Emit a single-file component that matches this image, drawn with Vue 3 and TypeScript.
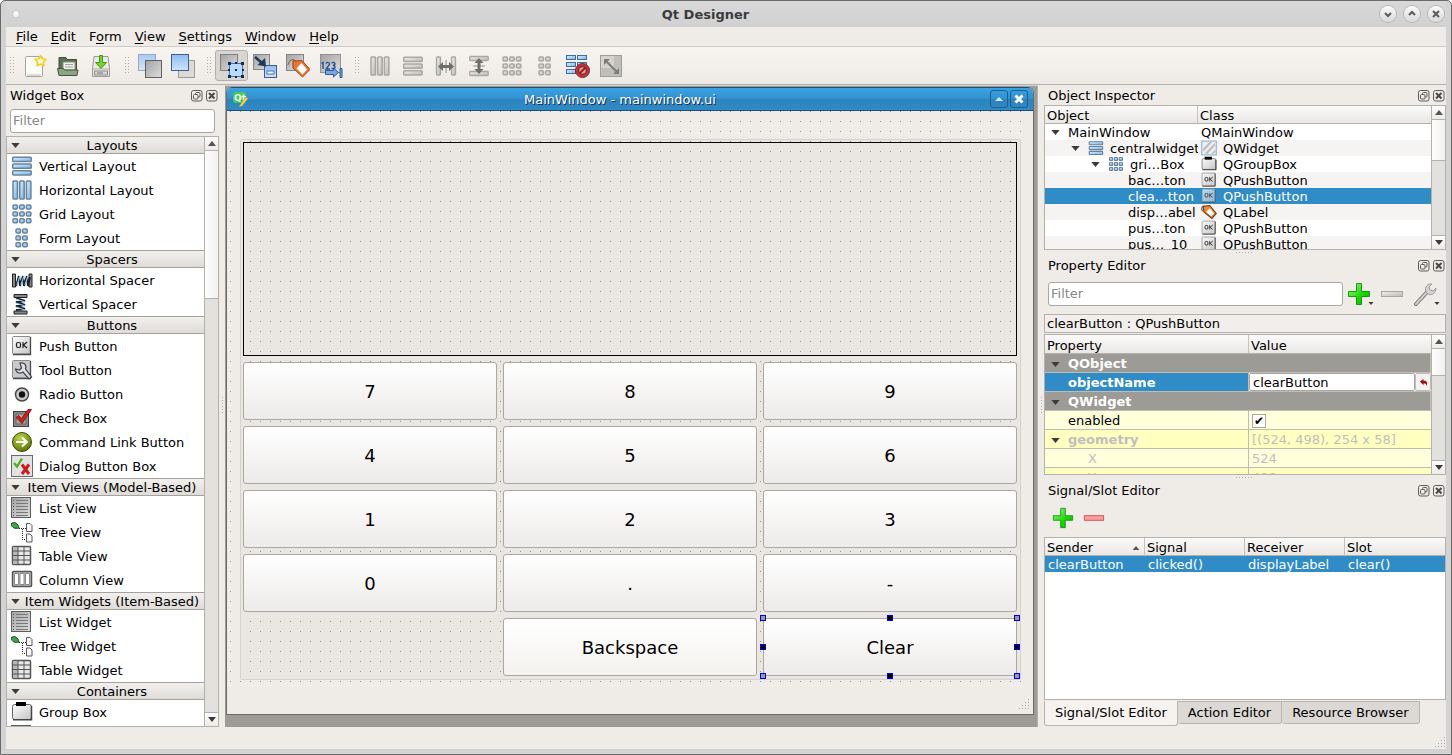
<script setup lang="ts">
import { ref } from 'vue'

interface Entry { icon: string; label: string }
interface Category { title: string; items: Entry[] }
interface TreeRow { depth: number; name: string; cls: string; open?: boolean; icon?: string; clsIcon?: string; selected?: boolean }
interface Tool { icon: string; label: string; active?: boolean; gray?: boolean }

const menus = [
  ['', 'F', 'ile'], ['', 'E', 'dit'], ['F', 'o', 'rm'], ['', 'V', 'iew'],
  ['', 'S', 'ettings'], ['', 'W', 'indow'], ['', 'H', 'elp'],
]

const toolGroups: Tool[][] = [
  [{ icon: 'new', label: 'New' }, { icon: 'open', label: 'Open' }, { icon: 'save', label: 'Save' }],
  [{ icon: 'back', label: 'Send to Back' }, { icon: 'front', label: 'Bring to Front' }],
  [
    { icon: 'widgets', label: 'Edit Widgets', active: true },
    { icon: 'signals', label: 'Edit Signals/Slots' },
    { icon: 'buddies', label: 'Edit Buddies' },
    { icon: 'taborder', label: 'Edit Tab Order' },
  ],
  [
    { icon: 'hl', label: 'Lay Out Horizontally', gray: true },
    { icon: 'vl', label: 'Lay Out Vertically', gray: true },
    { icon: 'hsplit', label: 'Horizontal Splitter', gray: true },
    { icon: 'vsplit', label: 'Vertical Splitter', gray: true },
    { icon: 'grid', label: 'Lay Out in a Grid', gray: true },
    { icon: 'form', label: 'Lay Out in a Form', gray: true },
    { icon: 'break', label: 'Break Layout' },
    { icon: 'adjust', label: 'Adjust Size' },
  ],
]

const categories: Category[] = [
  { title: 'Layouts', items: [
    { icon: 'vl', label: 'Vertical Layout' }, { icon: 'hl', label: 'Horizontal Layout' },
    { icon: 'grid', label: 'Grid Layout' }, { icon: 'form', label: 'Form Layout' }] },
  { title: 'Spacers', items: [
    { icon: 'hspacer', label: 'Horizontal Spacer' }, { icon: 'vspacer', label: 'Vertical Spacer' }] },
  { title: 'Buttons', items: [
    { icon: 'push', label: 'Push Button' }, { icon: 'tool', label: 'Tool Button' },
    { icon: 'radio', label: 'Radio Button' }, { icon: 'check', label: 'Check Box' },
    { icon: 'command', label: 'Command Link Button' }, { icon: 'dialog', label: 'Dialog Button Box' }] },
  { title: 'Item Views (Model-Based)', items: [
    { icon: 'list', label: 'List View' }, { icon: 'tree', label: 'Tree View' },
    { icon: 'table', label: 'Table View' }, { icon: 'column', label: 'Column View' }] },
  { title: 'Item Widgets (Item-Based)', items: [
    { icon: 'list', label: 'List Widget' }, { icon: 'tree', label: 'Tree Widget' },
    { icon: 'table', label: 'Table Widget' }] },
  { title: 'Containers', items: [
    { icon: 'group', label: 'Group Box' }, { icon: 'list', label: '' }] },
]

const keys = ['7', '8', '9', '4', '5', '6', '1', '2', '3', '0', '.', '-']
const handles = ['nw', 'n', 'ne', 'w', 'e', 'sw', 's', 'se']

const tree: TreeRow[] = [
  { depth: 0, name: 'MainWindow', cls: 'QMainWindow', open: true },
  { depth: 1, name: 'centralwidget', cls: 'QWidget', open: true, icon: 'vl', clsIcon: 'widget' },
  { depth: 2, name: 'gri…Box', cls: 'QGroupBox', open: true, icon: 'grid', clsIcon: 'group' },
  { depth: 3, name: 'bac…ton', cls: 'QPushButton', clsIcon: 'push' },
  { depth: 3, name: 'clea…tton', cls: 'QPushButton', clsIcon: 'push', selected: true },
  { depth: 3, name: 'disp…abel', cls: 'QLabel', clsIcon: 'label' },
  { depth: 3, name: 'pus…ton', cls: 'QPushButton', clsIcon: 'push' },
  { depth: 3, name: 'pus…_10', cls: 'QPushButton', clsIcon: 'push' },
]

const filter = ref('')
const propFilter = ref('')
const objectName = ref('clearButton')
const enabled = ref(true)
const tabs = ['Signal/Slot Editor', 'Action Editor', 'Resource Browser']
const activeTab = ref(0)
</script>

<template>
  <div class="window">
    <svg class="defs" aria-hidden="true">
      <defs>
        <linearGradient id="gBlue" x1="0" y1="0" x2="1" y2="1"><stop offset="0" stop-color="#d8f0ff" /><stop offset="1" stop-color="#7db2de" /></linearGradient>
        <linearGradient id="gGray" x1="0" y1="0" x2="1" y2="1"><stop offset="0" stop-color="#f0efed" /><stop offset="1" stop-color="#bbb9b6" /></linearGradient>
        <linearGradient id="gFace" x1="0" y1="0" x2="1" y2="1"><stop offset="0" stop-color="#fdfdfd" /><stop offset="1" stop-color="#c4c4c4" /></linearGradient>
        <linearGradient id="gSq" x1="0" y1="0" x2="1" y2="1"><stop offset="0" stop-color="#a2a2a2" /><stop offset="1" stop-color="#dedede" /></linearGradient>
        <linearGradient id="gSky" x1="0" y1="0" x2="0" y2="1"><stop offset="0" stop-color="#8fbcf2" /><stop offset="1" stop-color="#cfe3fb" /></linearGradient>
        <linearGradient id="gGreen" x1="0" y1="0" x2="1" y2="1"><stop offset="0" stop-color="#a6f58e" /><stop offset=".6" stop-color="#14d800" /><stop offset="1" stop-color="#0fb000" /></linearGradient>
        <radialGradient id="gOlive" cx=".4" cy=".3" r=".7"><stop offset="0" stop-color="#bfd44a" /><stop offset="1" stop-color="#5c7a00" /></radialGradient>
      </defs>
      <symbol id="new" viewBox="0 0 24 24">
        <rect x="2.500" y="2.500" width="17" height="20" rx="1" fill="#fbfbf8" stroke="#a5a39b" /><path d="M4 21h14" stroke="#dedcd2" stroke-width="2" />
        <path d="M17.500 1.500l1.700 3.300 3.800.5-2.700 2.700.7 3.800-3.500-1.800-3.500 1.800.7-3.800-2.700-2.700 3.800-.5z" fill="#fffbd0" stroke="#f0cf1c" stroke-width="1.600" stroke-linejoin="round" />
      </symbol>
      <symbol id="open" viewBox="0 0 24 24">
        <path d="M3 19V3.500h7l1 2h9.500V19z" fill="#5a7150" stroke="#3d5236" /><rect x="7" y="8" width="12" height="8" fill="#efefeb" stroke="#8b9285" /><path d="M9 10.500h8M9 13h8" stroke="#a3a3a0" />
        <path d="M1.500 14.500h6l1 1.500h13.500l-1 5.500H3z" fill="#8ea383" stroke="#42563a" />
      </symbol>
      <symbol id="save" viewBox="0 0 24 24">
        <path d="M5 2.500h14l1.500 12v8h-17v-8z" fill="#eceae6" stroke="#9b9a96" /><path d="M4 15h16" stroke="#b2b0ac" /><rect x="5.500" y="17" width="13" height="4" fill="#d6d6d2" stroke="#8b8b88" /><path d="M8 19h6" stroke="#777" />
        <path d="M10.500 1.500h3v7h4L12 14.500 6.500 8.500h4z" fill="#76d22c" stroke="#3e9a10" />
      </symbol>
      <symbol id="back" viewBox="0 0 24 24">
        <rect x=".5" y=".5" width="17" height="16" fill="url(#gSky)" stroke="#7191c0" opacity=".75" /><rect x="7.500" y="6.500" width="16" height="17" fill="url(#gSq)" stroke="#606060" />
      </symbol>
      <symbol id="front" viewBox="0 0 24 24">
        <rect x="7.500" y="6.500" width="16" height="17" fill="#dcdad6" stroke="#9d9b98" /><rect x=".5" y=".5" width="17" height="16" fill="url(#gSky)" stroke="#3e5f93" />
      </symbol>
      <symbol id="widgets" viewBox="0 0 24 24">
        <rect x=".5" y=".5" width="17" height="16" fill="url(#gSq)" stroke="#808080" /><rect x="9.500" y="9.500" width="13" height="13" fill="#b9dafb" stroke="#3d75c1" />
        <path d="M8 8h3v3H8zM15 8h2v2h-2zM21 8h3v3h-3zM8 15h2v2H8zM22 15h2v2h-2zM8 21h3v3H8zM15 22h2v2h-2zM21 21h3v3h-3zM15 15h2v2h-2z" fill="#14294c" />
      </symbol>
      <symbol id="signals" viewBox="0 0 24 24">
        <rect x=".5" y=".5" width="16" height="15" fill="url(#gSq)" stroke="#868686" /><rect x="11.500" y="11.500" width="12" height="12" fill="url(#gSky)" stroke="#3d5e8d" /><rect x="14" y="17" width="7" height="3" fill="#fff" stroke="#3f74c0" />
        <path d="M2 3l7 6" stroke="#20395b" stroke-width="2.500" /><path d="M13 12.500L4.500 11 12 4z" fill="#20395b" />
      </symbol>
      <symbol id="buddies" viewBox="0 0 24 24">
        <rect x=".5" y=".5" width="17" height="16" fill="url(#gSq)" stroke="#858585" /><path d="M2 11C3 5 9 3 12 11" fill="none" stroke="#70564a" />
        <path d="M7 7l9-.5 8 9-7.500 7.500L7 14z" fill="#ea752f" stroke="#a94410" /><path d="M15.500 9l5.500 6.500-4.500 5-6-6z" fill="#fff" />
      </symbol>
      <symbol id="taborder" viewBox="0 0 24 24">
        <rect x="1.500" y=".5" width="20" height="18" fill="url(#gSq)" stroke="#929292" />
        <path d="M2.500 9.500l1.500-1V15M7 9.500c1-2 4-1 3.500 1L7 15h4M12.500 9c2-1.500 4 0 3.500 1.500L14 11.500c3 0 3 4-1.500 3" fill="none" stroke="#1d4f9a" stroke-width="1.300" />
        <path d="M6.500 16.500h8v-2.500l5 4.500-5 4.500v-2.500h-8zM21 14.500h2v9h-2z" fill="#75a8e8" stroke="#173f80" stroke-width=".8" />
      </symbol>
      <symbol id="vl" viewBox="0 0 22 22">
        <g fill="var(--f)" stroke="var(--s)" stroke-width="1.500"><rect x="1.700" y="2.300" width="18.500" height="4.200" rx=".8" /><rect x="1.700" y="9" width="18.500" height="4.200" rx=".8" /><rect x="1.700" y="15.700" width="18.500" height="4.200" rx=".8" /></g>
      </symbol>
      <symbol id="hl" viewBox="0 0 22 22">
        <g fill="var(--f)" stroke="var(--s)" stroke-width="1.500"><rect x="2" y="2" width="4.500" height="18" rx=".8" /><rect x="8.700" y="2" width="4.500" height="18" rx=".8" /><rect x="15.400" y="2" width="4.500" height="18" rx=".8" /></g>
      </symbol>
      <symbol id="grid" viewBox="0 0 22 22">
        <g fill="var(--f)" stroke="var(--s)" stroke-width="1.500"><rect x="2" y="2" width="4.500" height="4" rx="1" /><rect x="8.700" y="2" width="4.500" height="4" rx="1" /><rect x="15.400" y="2" width="4.500" height="4" rx="1" /><rect x="2" y="8.900" width="4.500" height="4" rx="1" /><rect x="8.700" y="8.900" width="4.500" height="4" rx="1" /><rect x="15.400" y="8.900" width="4.500" height="4" rx="1" /><rect x="2" y="15.800" width="4.500" height="4" rx="1" /><rect x="8.700" y="15.800" width="4.500" height="4" rx="1" /><rect x="15.400" y="15.800" width="4.500" height="4" rx="1" /></g>
      </symbol>
      <symbol id="form" viewBox="0 0 22 22">
        <g fill="var(--f)" stroke="var(--s)" stroke-width="1.500"><rect x="5" y="2" width="4.500" height="4" rx="1" /><rect x="11.700" y="2" width="4.500" height="4" rx="1" /><rect x="5" y="8.900" width="4.500" height="4" rx="1" /><rect x="11.700" y="8.900" width="4.500" height="4" rx="1" /><rect x="5" y="15.800" width="4.500" height="4" rx="1" /><rect x="11.700" y="15.800" width="4.500" height="4" rx="1" /></g>
      </symbol>
      <symbol id="hsplit" viewBox="0 0 22 22">
        <g fill="var(--f)" stroke="var(--s)" stroke-width="1.300"><rect x="1.500" y="2" width="4" height="18" rx=".8" /><rect x="16.500" y="2" width="4" height="18" rx=".8" /></g><path d="M11 5v13" stroke="#8f8d8a" /><path d="M3 11.500l5-4.500v3h6V7l5 4.500-5 4.500v-3H8v3z" fill="#6d6f6c" />
      </symbol>
      <symbol id="vsplit" viewBox="0 0 22 22">
        <g fill="var(--f)" stroke="var(--s)" stroke-width="1.300"><rect x="1.700" y="1.500" width="18.500" height="4" rx=".8" /><rect x="1.700" y="16.500" width="18.500" height="4" rx=".8" /></g><path d="M5 11h12" stroke="#8f8d8a" /><path d="M11 3l4.500 5h-3v6h3L11 19l-4.500-5h3V8h-3z" fill="#6d6f6c" />
      </symbol>
      <symbol id="break" viewBox="0 0 24 24">
        <g fill="url(#gBlue)" stroke="#3f6da0"><rect x=".5" y="1.500" width="9" height="4" /><rect x="11.500" y="1.500" width="9" height="4" /><rect x=".5" y="8.500" width="9" height="4" /><rect x="11.500" y="8.500" width="9" height="4" /><rect x=".5" y="15.500" width="9" height="4" /></g>
        <circle cx="16.500" cy="16.500" r="7" fill="#c4383a" stroke="#7e2224" /><circle cx="16.500" cy="16.500" r="4" fill="#ef9a98" stroke="#8a2426" stroke-width="1.500" /><path d="M13.500 19.500l6-6" stroke="#8a2426" stroke-width="2" />
      </symbol>
      <symbol id="adjust" viewBox="0 0 24 24">
        <rect x="1.500" y="1.500" width="21" height="21" fill="#c1bfbc" stroke="#a09e9b" /><path d="M2 2h13v12H2z" fill="#d5d3d0" /><path d="M7 7l11 11" stroke="#7c7d79" stroke-width="2" /><path d="M5 5h6l-6 6zM20 20v-6l-6 6z" fill="#7c7d79" />
      </symbol>
      <symbol id="hspacer" viewBox="0 0 22 22">
        <path d="M1.500 5h3v13h-3zM18 5h3v13h-3z" fill="#888" stroke="#222" /><path d="M5 17L8 7l1 10 3-10 1 10 3-10 1 10 2-9" fill="none" stroke="#18222c" stroke-width="2" /><path d="M6 16l3-9M10 16l3-9M14 16l3-9" stroke="#94c6e8" stroke-width="1.200" />
      </symbol>
      <symbol id="vspacer" viewBox="0 0 22 22">
        <path d="M3 1.500h13v3H3zM3 18h13v3H3z" fill="#888" stroke="#222" /><path d="M5 5l9 3-9 1 9 3-9 1 9 3-9 1" fill="none" stroke="#18222c" stroke-width="2" /><path d="M5 6l9 3M5 10l9 3M5 14l9 3" stroke="#94c6e8" stroke-width="1.200" />
      </symbol>
      <symbol id="push" viewBox="0 0 22 22">
        <rect x="1.500" y="1.500" width="18" height="17.500" rx="1" fill="url(#gFace)" stroke="#8b8b8b" /><path d="M2 19.500h17.500V2" fill="none" stroke="#4b4b4b" stroke-width="1.300" />
        <rect x="5.500" y="7.500" width="4" height="5" rx="1.500" fill="none" stroke="#222" stroke-width="1.200" /><path d="M12 7v6M16 7l-3.500 3 3.500 3" fill="none" stroke="#222" stroke-width="1.200" />
      </symbol>
      <symbol id="tool" viewBox="0 0 22 22">
        <rect x="1.500" y="1.500" width="18" height="17.500" rx="1" fill="#c9c9cb" stroke="#8b8b8b" /><path d="M2 19.500h17.500V2" fill="none" stroke="#4b4b4b" stroke-width="1.300" />
        <path d="M9 4c4-1 7 2 5.500 6l6 8-2.500 2-6-7c-3 2-7 1-7.500-3l4 1 2-2z" fill="#dfe1e6" stroke="#3b3d46" stroke-width="1.200" />
      </symbol>
      <symbol id="radio" viewBox="0 0 22 22"><circle cx="11" cy="11.500" r="6.500" fill="#cacaca" stroke="#4b4b4b" stroke-width="1.500" /><circle cx="11" cy="11.500" r="3.200" fill="#111" /></symbol>
      <symbol id="check" viewBox="0 0 22 22">
        <rect x="2.500" y="4.500" width="15" height="15" fill="#8b8b8b" stroke="#3d3d3d" /><rect x="5" y="7" width="10" height="10" fill="#a6a6a6" stroke="#666" />
        <path d="M5 10.500l2.500-2 3 3L17 2.500h3.500L11 16.500z" fill="#d61d1d" stroke="#7a0b0b" stroke-width=".8" />
      </symbol>
      <symbol id="command" viewBox="0 0 22 22"><circle cx="11" cy="11" r="9.500" fill="url(#gOlive)" stroke="#3f4a10" /><path d="M5 11h10M11 6.500l4.700 4.500-4.700 4.500" fill="none" stroke="#fff" stroke-width="2.200" /></symbol>
      <symbol id="dialog" viewBox="0 0 22 22">
        <rect x=".5" y=".5" width="21" height="21" fill="#e2e2e2" stroke="#6a6a6a" /><path d="M3 8l3 3.500L11 3.500" fill="none" stroke="#4cb218" stroke-width="2.300" /><path d="M11 9.500l7 9.500M18 9.500L11 19" stroke="#cb1c1c" stroke-width="3" />
      </symbol>
      <symbol id="list" viewBox="0 0 22 22">
        <rect x=".5" y=".5" width="19" height="20" fill="url(#gSq)" stroke="#5e5e5e" /><path d="M5 3.500h12M5 6.500h12M5 9.500h12M5 12.500h12M5 15.500h12M5 18.500h12" stroke="#777" /><path d="M2 3.500h1M2 6.500h1M2 9.500h1M2 12.500h1M2 15.500h1M2 18.500h1" stroke="#555" />
      </symbol>
      <symbol id="tree" viewBox="0 0 22 22">
        <path d="M0 3c3-3 7-1 8 4-4 1-7 0-8-4z" fill="#3aa84a" stroke="#0e4a18" /><path d="M8 7.500h7M11.500 8v10.500h4" fill="none" stroke="#222" stroke-dasharray="1 1" />
        <path d="M15.500 2.500h3.500l2 2v6h-5.500zM15.500 13h3.500l2 2v6h-5.500z" fill="#f8f8f8" stroke="#5a5a5a" />
      </symbol>
      <symbol id="table" viewBox="0 0 22 22">
        <rect x="1.500" y="1.500" width="18" height="18" rx="1" fill="#e8e8e8" stroke="#555" stroke-width="1.500" /><path d="M2 2h5v17H2z" fill="#b7b7b7" /><path d="M2 6h17M2 10.500h17M2 15h17M7 2v17M13 2v17" stroke="#555" />
      </symbol>
      <symbol id="column" viewBox="0 0 22 22"><rect x="1.500" y="2.500" width="19" height="15" rx="1" fill="#bcbcbc" stroke="#555" stroke-width="1.500" /><path d="M3.500 4.500h4v11h-4zM9 4.500h4v11H9zM14.500 4.500h4v11h-4z" fill="#fff" stroke="#777" stroke-width=".8" /></symbol>
      <symbol id="group" viewBox="0 0 22 22"><rect x="1.500" y="3.500" width="19" height="15" rx="2" fill="url(#gFace)" stroke="#666" /><path d="M2 18.800h18.500V5" fill="none" stroke="#444" stroke-width="1.500" /><path d="M5 1h10v4H5z" fill="#000" /></symbol>
      <symbol id="widget" viewBox="0 0 22 22"><rect x="1" y="1.500" width="20" height="19" fill="#eee" stroke="#8fb0dc" stroke-width="1.500" /><path d="M3 12l8-9h4L3 16zM5 19L19 4v4L9 19zM14 19l6-6v3l-3 3z" fill="#bbb" /></symbol>
      <symbol id="label" viewBox="0 0 22 22"><path d="M2 10C-1 3 4 1 9 6" fill="none" stroke="#555" stroke-width="1.500" /><path d="M3 3l9-1 9 11-6 7L4 11z" fill="#f08a30" stroke="#6a3b16" stroke-width="1.500" /><path d="M12 6l6 7-4 4-7-6z" fill="#fff" /></symbol>
      <symbol id="plus" viewBox="0 0 24 24"><path d="M9.500 1.500h5v8H22.500v5h-8V22.500h-5v-8H1.500v-5h8z" fill="url(#gGreen)" stroke="#149a10" /></symbol>
      <symbol id="minus" viewBox="0 0 24 24"><rect x="1.500" y="9.500" width="21" height="5" fill="var(--f)" stroke="var(--s)" /></symbol>
      <symbol id="wrench" viewBox="0 0 24 24"><path d="M3 22L15 9" stroke="#777" stroke-width="4" stroke-linecap="round" /><path d="M3 22L15 9" stroke="#cfcfcf" stroke-width="2" stroke-linecap="round" /><path d="M13 10c-2-5 2-9 6-8l-3 3 1 3 3 1 3-3c0 5-4 8-8 6z" fill="#d2d2d2" stroke="#9c9c9c" /></symbol>
      <symbol id="down" viewBox="0 0 10 6"><path d="M0 0h10L5 6z" fill="#3c3b39" /></symbol>
      <symbol id="up" viewBox="0 0 10 6"><path d="M0 6h10L5 0z" fill="#55534f" /></symbol>
      <symbol id="float" viewBox="0 0 12 12"><rect x=".5" y=".5" width="10.500" height="10.500" rx="2" fill="none" stroke="#5d5b58" /><rect x="4.500" y="2.500" width="4.500" height="4.500" rx="1" fill="none" stroke="#5d5b58" /><rect x="2.500" y="4.500" width="4.500" height="4.500" rx="1" fill="#efebe7" stroke="#5d5b58" /></symbol>
      <symbol id="close" viewBox="0 0 12 12"><rect x=".5" y=".5" width="10.500" height="10.500" rx="2" fill="none" stroke="#5d5b58" /><path d="M3 3l5.500 5.500M8.500 3L3 8.500" stroke="#4a4946" stroke-width="2" /></symbol>
      <symbol id="grip" viewBox="0 0 11 11"><path d="M10 0h1v1h-1zM7 3h1v1H7zM10 3h1v1h-1zM4 6h1v1H4zM7 6h1v1H7zM10 6h1v1h-1zM1 9h1v1H1zM4 9h1v1H4zM7 9h1v1H7zM10 9h1v1h-1z" fill="#aaa7a3" /></symbol>
    </svg>

    <header class="titlebar">
      <span class="pin"></span>
      <h1>Qt Designer</h1>
      <div class="winbtns">
        <button aria-label="Minimize"><svg viewBox="0 0 16 16"><path d="M5 7l3 3 3-3" /></svg></button>
        <button aria-label="Maximize"><svg viewBox="0 0 16 16"><path d="M5 9l3-3 3 3" /></svg></button>
        <button aria-label="Close"><svg viewBox="0 0 16 16"><path d="M5 5l6 6M11 5l-6 6" /></svg></button>
      </div>
    </header>

    <nav class="menubar">
      <button v-for="m in menus" :key="m[1]">{{ m[0] }}<u>{{ m[1] }}</u>{{ m[2] }}</button>
    </nav>

    <div class="toolbars">
      <div v-for="(g, i) in toolGroups" :key="i" class="toolbar">
        <span class="handle"></span>
        <button v-for="t in g" :key="t.icon" :aria-label="t.label" :class="{ active: t.active, gray: t.gray }">
          <svg><use :href="'#' + t.icon" /></svg>
        </button>
      </div>
    </div>

    <main class="body">
      <aside class="left">
        <div class="docktitle">
          <h2>Widget Box</h2>
          <button aria-label="Float"><svg><use href="#float" /></svg></button>
          <button aria-label="Close"><svg><use href="#close" /></svg></button>
        </div>
        <input v-model="filter" class="field boxfilter" placeholder="Filter" aria-label="Filter widgets" />
        <div class="frame widgetbox">
          <div class="scroller">
            <section v-for="c in categories" :key="c.title">
              <button class="cat"><svg><use href="#down" /></svg><span>{{ c.title }}</span></button>
              <ul>
                <li v-for="it in c.items" :key="it.label"><svg><use :href="'#' + it.icon" /></svg><span>{{ it.label }}</span></li>
              </ul>
            </section>
          </div>
          <div class="scrollbar">
            <button aria-label="Scroll up"><svg><use href="#up" /></svg></button>
            <div class="track"><div class="thumb t1"></div></div>
            <button aria-label="Scroll down"><svg><use href="#down" /></svg></button>
          </div>
        </div>
      </aside>

      <div class="vsplitter"></div>

      <section class="mdi">
        <div class="subwin">
          <div class="subtitle">
            <svg class="qt" viewBox="0 0 16 16"><rect x="0" y="1" width="13" height="11" rx="2" fill="#41cd52" /><text x="1" y="10" class="qttext">Qt</text><path d="M7 14l6-8 2 1.500L9 15l-3 1z" fill="#f6d95b" stroke="#b88b1b" stroke-width=".6" /></svg>
            <span>MainWindow - mainwindow.ui</span>
            <div class="subbtns">
              <button aria-label="Shade"><svg viewBox="0 0 16 16"><path d="M4 10h8L8 6z" fill="#d5e8f6" /></svg></button>
              <button aria-label="Close form"><svg viewBox="0 0 16 16"><path d="M4.500 4.500l7 7M11.500 4.500l-7 7" stroke="#fff" stroke-width="3" /></svg></button>
            </div>
          </div>
          <div class="canvas">
            <div class="groupbox">
              <div class="display"></div>
              <div class="keypad">
                <button v-for="k in keys" :key="k">{{ k }}</button>
                <span></span>
                <button class="backspace">Backspace</button>
                <button class="selected">Clear<i v-for="h in handles" :key="h" :class="['knob', h]"></i></button>
              </div>
            </div>
          </div>
          <div class="substatus"><svg><use href="#grip" /></svg></div>
        </div>
      </section>

      <div class="vsplitter"></div>

      <aside class="right">
        <div class="docktitle">
          <h2>Object Inspector</h2>
          <button aria-label="Float"><svg><use href="#float" /></svg></button>
          <button aria-label="Close"><svg><use href="#close" /></svg></button>
        </div>
        <div class="frame inspector">
          <div class="scroller">
            <table class="tree">
              <colgroup><col class="c1" /><col /></colgroup>
              <thead><tr><th>Object</th><th>Class</th></tr></thead>
              <tbody>
                <tr v-for="(r, i) in tree" :key="i" :class="{ alt: i % 2, sel: r.selected }">
                  <td :style="{ paddingLeft: r.depth * 20 + 'px' }">
                    <div class="cell">
                      <button v-if="r.open" class="twisty" :aria-label="'Collapse ' + r.name"><svg><use href="#down" /></svg></button>
                      <span v-else class="twisty"></span>
                      <svg v-if="r.icon" class="ricon"><use :href="'#' + r.icon" /></svg>
                      <span class="txt">{{ r.name }}</span>
                    </div>
                  </td>
                  <td>
                    <div class="cell cls"><svg v-if="r.clsIcon" class="ricon"><use :href="'#' + r.clsIcon" /></svg><span class="txt">{{ r.cls }}</span></div>
                  </td>
                </tr>
              </tbody>
            </table>
          </div>
          <div class="scrollbar">
            <button aria-label="Scroll up"><svg><use href="#up" /></svg></button>
            <div class="track"><div class="thumb t2"></div></div>
            <button aria-label="Scroll down"><svg><use href="#down" /></svg></button>
          </div>
        </div>
        <div class="hsplitter"></div>

        <div class="docktitle">
          <h2>Property Editor</h2>
          <button aria-label="Float"><svg><use href="#float" /></svg></button>
          <button aria-label="Close"><svg><use href="#close" /></svg></button>
        </div>
        <div class="proptools">
          <input v-model="propFilter" class="field" placeholder="Filter" aria-label="Filter properties" />
          <button aria-label="Add dynamic property"><svg class="big"><use href="#plus" /></svg><svg class="arrow"><use href="#down" /></svg></button>
          <button class="gray" aria-label="Remove dynamic property"><svg class="big"><use href="#minus" /></svg></button>
          <button aria-label="Configure"><svg class="big"><use href="#wrench" /></svg><svg class="arrow"><use href="#down" /></svg></button>
        </div>
        <div class="objlabel">clearButton : QPushButton</div>
        <div class="frame properties">
          <div class="scroller">
            <table class="props">
              <colgroup><col class="c2" /><col /></colgroup>
              <thead><tr><th>Property</th><th>Value</th></tr></thead>
              <tbody>
                <tr class="grp"><td colspan="2"><div class="cell"><button class="twisty" aria-label="Collapse QObject"><svg><use href="#down" /></svg></button><b>QObject</b></div></td></tr>
                <tr class="cur"><td><label class="name" for="objname">objectName</label></td><td class="edit"><div class="editor"><input id="objname" v-model="objectName" /><button aria-label="Reset"><svg viewBox="0 0 10 10"><path d="M1 4l4-3v2c4 0 5 2 3 6 0-3-1-3-3-3v2z" fill="#a01010" /></svg></button></div></td></tr>
                <tr class="grp"><td colspan="2"><div class="cell"><button class="twisty" aria-label="Collapse QWidget"><svg><use href="#down" /></svg></button><b>QWidget</b></div></td></tr>
                <tr class="y1"><td><label class="name" for="enabled">enabled</label></td><td><input id="enabled" v-model="enabled" type="checkbox" class="tick" /></td></tr>
                <tr class="y2 off"><td><div class="cell"><button class="twisty" aria-label="Collapse geometry"><svg><use href="#down" /></svg></button><b>geometry</b></div></td><td>[(524, 498), 254 x 58]</td></tr>
                <tr class="y1 off"><td><span class="sub">X</span></td><td>524</td></tr>
                <tr class="y2 off"><td><span class="sub">Y</span></td><td>498</td></tr>
              </tbody>
            </table>
          </div>
          <div class="scrollbar">
            <button aria-label="Scroll up"><svg><use href="#up" /></svg></button>
            <div class="track"><div class="thumb t3"></div></div>
            <button aria-label="Scroll down"><svg><use href="#down" /></svg></button>
          </div>
        </div>
        <div class="hsplitter"></div>

        <div class="docktitle">
          <h2>Signal/Slot Editor</h2>
          <button aria-label="Float"><svg><use href="#float" /></svg></button>
          <button aria-label="Close"><svg><use href="#close" /></svg></button>
        </div>
        <div class="sigtools">
          <button aria-label="Add connection"><svg><use href="#plus" /></svg></button>
          <button class="red" aria-label="Remove connection"><svg><use href="#minus" /></svg></button>
        </div>
        <div class="frame signals">
          <table>
            <colgroup><col class="c3" /><col class="c3" /><col class="c3" /><col /></colgroup>
            <thead><tr><th><span class="sorted">Sender<svg><use href="#up" /></svg></span></th><th>Signal</th><th>Receiver</th><th>Slot</th></tr></thead>
            <tbody><tr class="sel"><td>clearButton</td><td>clicked()</td><td>displayLabel</td><td>clear()</td></tr></tbody>
          </table>
        </div>
        <div class="tabs" role="tablist">
          <button v-for="(t, i) in tabs" :key="t" role="tab" :aria-selected="i === activeTab" :class="{ on: i === activeTab }" @click="activeTab = i">{{ t }}</button>
        </div>
      </aside>
    </main>
    <footer class="status"><svg><use href="#grip" /></svg></footer>
  </div>
</template>

<style>
body { margin: 0; background: #fff; overflow: hidden; }
</style>

<style scoped>
.window {
  --f: url(#gBlue); --s: #67849f;
  box-sizing: border-box; height: 100vh; display: flex; flex-direction: column;
  border: 1px solid #6a6a6a; border-radius: 5px 5px 0 0; padding: 0 5px 5px;
  background: #d3d3d3; color: #000; font: 13px/16px "DejaVu Sans", Verdana, sans-serif;
}
.window *, .window *::before { box-sizing: border-box; }
.defs { position: absolute; width: 0; height: 0; }
button { margin: 0; padding: 0; border: 0; background: none; font: inherit; color: inherit; }
h1, h2, ul { margin: 0; padding: 0; font: inherit; list-style: none; }
svg { display: block; flex: none; }
.gray { --f: url(#gGray); --s: #a9a7a4; }
.red { --f: #ff9d9d; --s: #cc5050; }

.titlebar { flex: none; height: 26px; display: grid; grid-template-columns: 39px 1fr 80px; align-items: center; background: linear-gradient(#d8d8d8, #d1d1d1); }
.titlebar h1 { padding-top: 2px; text-align: center; font-weight: bold; color: #3b3b3b; }
.pin { width: 8px; height: 8px; margin-left: 6px; border-radius: 50%; background: #f7f7f7; border: 1px solid #c4c4c4; }
.winbtns { display: flex; justify-content: flex-end; gap: 8px; padding-right: 2px; }
.winbtns button { width: 16px; height: 16px; border-radius: 50%; background: linear-gradient(#fafafa, #dadada); box-shadow: 0 0 0 1px #b5b5b5; }
.winbtns path { fill: none; stroke: #5a5a5a; stroke-width: 2; }

.menubar { flex: none; height: 20px; display: flex; padding-left: 3px; background: #efebe7; border-bottom: 1px solid #d0cdc9; }
.menubar button { padding: 0 6px 0 7px; }
u { text-underline-offset: 2px; }

.toolbars { flex: none; height: 38px; display: flex; align-items: center; background: linear-gradient(#f8f5f0, #edeae6); border-bottom: 1px solid #b4b1ad; }
.toolbar { display: flex; align-items: center; }
.handle { width: 16px; height: 17px; padding-left: 8px; background: conic-gradient(from 270deg at 1px 1px, #b0ada9 90deg, transparent 0) 0 0 / 3px 3px content-box; border-right: 4px solid transparent; background-clip: content-box; background-origin: content-box; }
.toolbar:first-child .handle { width: 12px; padding-left: 4px; }
.toolbar button { width: 33px; height: 31px; display: grid; place-items: center; }
.toolbar button svg { width: 24px; height: 24px; }
.toolbar button.gray svg { width: 22px; height: 22px; }
.toolbar button.active { background: #d9d6d2; border: 1px solid #b3b0ac; border-radius: 3px; }

.body { flex: 1; min-height: 0; display: flex; background: #efebe7; }
.left { flex: none; width: 213px; display: flex; flex-direction: column; }
.right { flex: none; width: 402px; display: flex; flex-direction: column; }
.vsplitter { flex: none; width: 6px; align-self: center; height: 18px; background: conic-gradient(from 270deg at 1px 1px, #b0ada9 90deg, transparent 0) 3px 0 / 3px 3px; clip-path: inset(0 2px 0 3px); }
.hsplitter { flex: none; height: 5px; width: 18px; align-self: center; background: conic-gradient(from 270deg at 1px 1px, #b0ada9 90deg, transparent 0) 0 2px / 3px 3px; clip-path: inset(2px 0 2px 0); }

.docktitle { flex: none; height: 20px; display: flex; align-items: center; gap: 3px; padding: 1px 1px 0 4px; }
.docktitle h2 { flex: 1; }
.docktitle svg { width: 12px; height: 12px; }
.frame { display: flex; border: 1px solid #b4b1ad; background: #fff; overflow: hidden; }
.field { height: 24px; border: 1px solid #aaa7a3; border-radius: 3px; background: #fff; padding: 0 2px 2px; font: inherit; outline: 0; min-width: 0; }
.field::placeholder { color: #888; opacity: 1; }
.boxfilter { flex: none; margin: 4px 4px 3px; }
.scroller { flex: 1; min-width: 0; overflow: hidden; }

.widgetbox { flex: 1; min-height: 0; }
.widgetbox .scroller { margin-top: -1px; }
.cat { width: 100%; height: 18px; display: flex; align-items: center; padding: 0 0 0 4px; border-top: 1px solid #a5a29e; border-bottom: 1px solid #a5a29e; background: linear-gradient(#f2f0ed, #dfdcd8); }
.cat svg { width: 9px; height: 5px; }
.cat span { flex: 1; line-height: 18px; padding-top: 2px; text-align: center; white-space: nowrap; }
.widgetbox li { height: 24px; display: flex; align-items: center; gap: 6px; padding-left: 4px; white-space: nowrap; }
.widgetbox li svg { width: 22px; height: 22px; }
.widgetbox li span { padding-top: 2px; }

.scrollbar { flex: none; width: 14px; display: flex; flex-direction: column; border-left: 1px solid #b4b1ad; background: #e3e1dd; }
.scrollbar button { flex: none; height: 14px; display: grid; place-items: center; background: linear-gradient(#fdfdfc, #edebe8); }
.scrollbar button:first-child { border-bottom: 1px solid #b4b1ad; }
.scrollbar button:last-child { border-top: 1px solid #b4b1ad; }
.scrollbar svg { width: 8px; height: 5px; }
.track { flex: 1; min-height: 0; }
.thumb { border-bottom: 1px solid #b4b1ad; background: linear-gradient(90deg, #fdfdfc, #f3f1ee); }
.t1 { height: 148px; }
.t2 { height: 41px; }
.t3 { height: 27px; }

.mdi { flex: 1; min-width: 0; display: flex; padding: 1px 3px 12px 1px; background: #9c9b96; border-top: 1px solid #d6d3cf; border-right: 1px solid #b4b1ad; }
.subwin { flex: 1; min-width: 0; display: flex; flex-direction: column; border: 1px solid #6a6a67; border-top: 0; border-radius: 6px 6px 0 0; background: #efebe7; overflow: hidden; }
.subtitle { flex: none; height: 24px; display: grid; grid-template-columns: 40px 1fr 60px; align-items: center; background: linear-gradient(#3ba3e2, #3190cf 50%, #2c84bd 51%, #2f8ac5); border-top: 1px solid #1c5078; border-bottom: 1px solid #1c5078; color: #fff; }
.subtitle span { padding-top: 2px; text-align: center; text-shadow: 1px 1px #10304a; }
.qt { width: 16px; height: 16px; margin-left: 6px; }
.qttext { font: bold 9px "DejaVu Sans", sans-serif; fill: #fff; }
.subbtns { display: flex; justify-content: flex-end; gap: 2px; padding-right: 5px; }
.subbtns button { width: 18px; height: 18px; display: grid; place-items: center; border: 1px solid #1c5f8f; border-radius: 3px; }
.subbtns svg { width: 16px; height: 16px; }

.canvas { flex: 1; min-height: 0; display: flex; margin: 0 12px 0 3px; padding: 28px 0 2px 10px; background: conic-gradient(from 270deg at 1px 1px, #98958f 90deg, transparent 0) 0 0 / 10px 10px; }
.groupbox { flex: 1; min-width: 0; display: flex; flex-direction: column; gap: 6px; padding: 2px 3px 3px 2px; border: 1px solid #d6d3cf; border-radius: 2px; background: #00000005; }
.display { flex: 1; border: 1px solid #000; }
.keypad { flex: none; display: grid; grid-template-columns: repeat(3, 1fr); grid-auto-rows: 58px; gap: 6px; }
.keypad button { position: relative; padding-top: 2px; border: 1px solid #aaa7a3; border-radius: 3px; background: linear-gradient(#fff, #edebe9); font-size: 18px; line-height: 24px; color: #000; }
.keypad .backspace { background: linear-gradient(#fff, #f4f2ef); }
.knob { position: absolute; width: 6px; height: 6px; border: 1px solid #0000f0; background: #000; }
.nw, .ne, .sw, .se { background: #999; }
.nw, .n, .ne { top: -4px; }
.sw, .s, .se { bottom: -4px; }
.nw, .w, .sw { left: -4px; }
.ne, .e, .se { right: -4px; }
.n, .s { left: calc(50% - 3px); }
.w, .e { top: calc(50% - 3px); }
.substatus { flex: none; height: 32px; display: flex; justify-content: flex-end; align-items: flex-end; padding: 0 4px 4px; }
.substatus svg, .status svg { width: 11px; height: 11px; }

table { width: 100%; table-layout: fixed; border-collapse: separate; border-spacing: 0; }
td, th { padding: 0; overflow: hidden; white-space: nowrap; text-align: left; font-weight: normal; }
th { height: 18px; padding: 2px 2px 0; line-height: 15px; border-bottom: 1px solid #b4b1ad; border-right: 1px solid #c5c2be; background: linear-gradient(#fafaf9, #eae8e5); }
th:last-child { border-right: 0; }
.c1 { width: 153px; }
.c2 { width: 204px; }
.c3 { width: 100px; }
.cell { display: flex; align-items: flex-start; height: 16px; }
.twisty { flex: none; width: 20px; height: 16px; margin-right: 3px; display: grid; place-items: center; }
.twisty svg { width: 9px; height: 5px; }
.ricon { width: 16px; height: 16px; margin-right: 6px; }
.txt { line-height: 18px; }
.inspector { flex: none; height: 145px; }
.tree td { height: 16px; }
.cls { padding-left: 3px; }
.alt { background: #f5f4f2; }
.sel { background: #308cc6; color: #fff; }
.sel .ricon { opacity: .7; }

.proptools { flex: none; height: 39px; display: flex; align-items: center; padding: 0 0 1px 4px; }
.proptools .field { flex: 1; margin-right: 4px; }
.proptools button { width: 33px; height: 24px; position: relative; }
.proptools .big { width: 24px; height: 24px; }
.proptools .arrow { position: absolute; right: 6px; bottom: 1px; width: 6px; height: 3px; }
.objlabel { flex: none; height: 19px; margin-bottom: 1px; padding: 0 2px; line-height: 18px; border: 1px solid #b4b1ad; background: #f1eeeb; }
.properties { flex: none; height: 141px; }
.props th { height: 19px; }
.props td { height: 19px; border-bottom: 1px solid #c0bdb9; padding: 2px 0 0 3px; }
.props td:first-child { border-right: 1px solid #c0bdb9; padding-left: 0; }
.grp { background: #9d9b96; color: #fff; }
.cur td:first-child { background: #308cc6; color: #fff; font-weight: bold; }
.props .edit { padding: 0; }
.name { padding-left: 23px; }
.sub { padding-left: 43px; }
.editor { display: flex; height: 18px; }
.editor input { flex: 1; min-width: 0; height: 18px; padding: 0 3px; border: 1px solid #aaa7a3; border-radius: 2px; font: inherit; outline: 0; }
.editor button { width: 16px; height: 18px; display: grid; place-items: center; border: 1px solid #c0bdb9; border-radius: 2px; background: #f5f3f1; }
.editor svg { width: 9px; height: 9px; }
.y1 { background: #ffffdc; }
.y2 { background: #ffffbf; }
.off { color: #bfbfbf; }
.tick { appearance: none; display: block; width: 14px; height: 14px; margin: 0; border: 1px solid #aaa7a3; background: #fff; }
.tick:checked::before { content: "✔"; display: block; font-size: 12px; line-height: 12px; text-align: center; color: #000; }

.sigtools { flex: none; height: 37px; display: flex; align-items: center; gap: 9px; padding: 0 0 1px 8px; }
.sigtools svg { width: 22px; height: 22px; }
.signals { flex: 1; min-height: 0; align-items: flex-start; }
.signals td { height: 16px; padding: 2px 0 0 3px; line-height: 14px; }
.sorted { display: flex; align-items: center; justify-content: space-between; padding-right: 2px; }
.sorted svg { width: 8px; height: 4px; }
.tabs { flex: none; height: 27px; display: flex; align-items: flex-start; padding-top: 1px; }
.tabs button { height: 23px; padding: 0 10px; border: 1px solid #b8b5b1; border-left: 0; border-radius: 0 0 3px 3px; background: #dcd9d5; white-space: nowrap; }
.tabs .on { height: 25px; border-left: 1px solid #b8b5b1; border-top: 0; background: #f5f2ef; }
.status { flex: none; height: 22px; display: flex; justify-content: flex-end; align-items: flex-end; padding: 0 1px 1px; background: #efebe7; }
</style>
